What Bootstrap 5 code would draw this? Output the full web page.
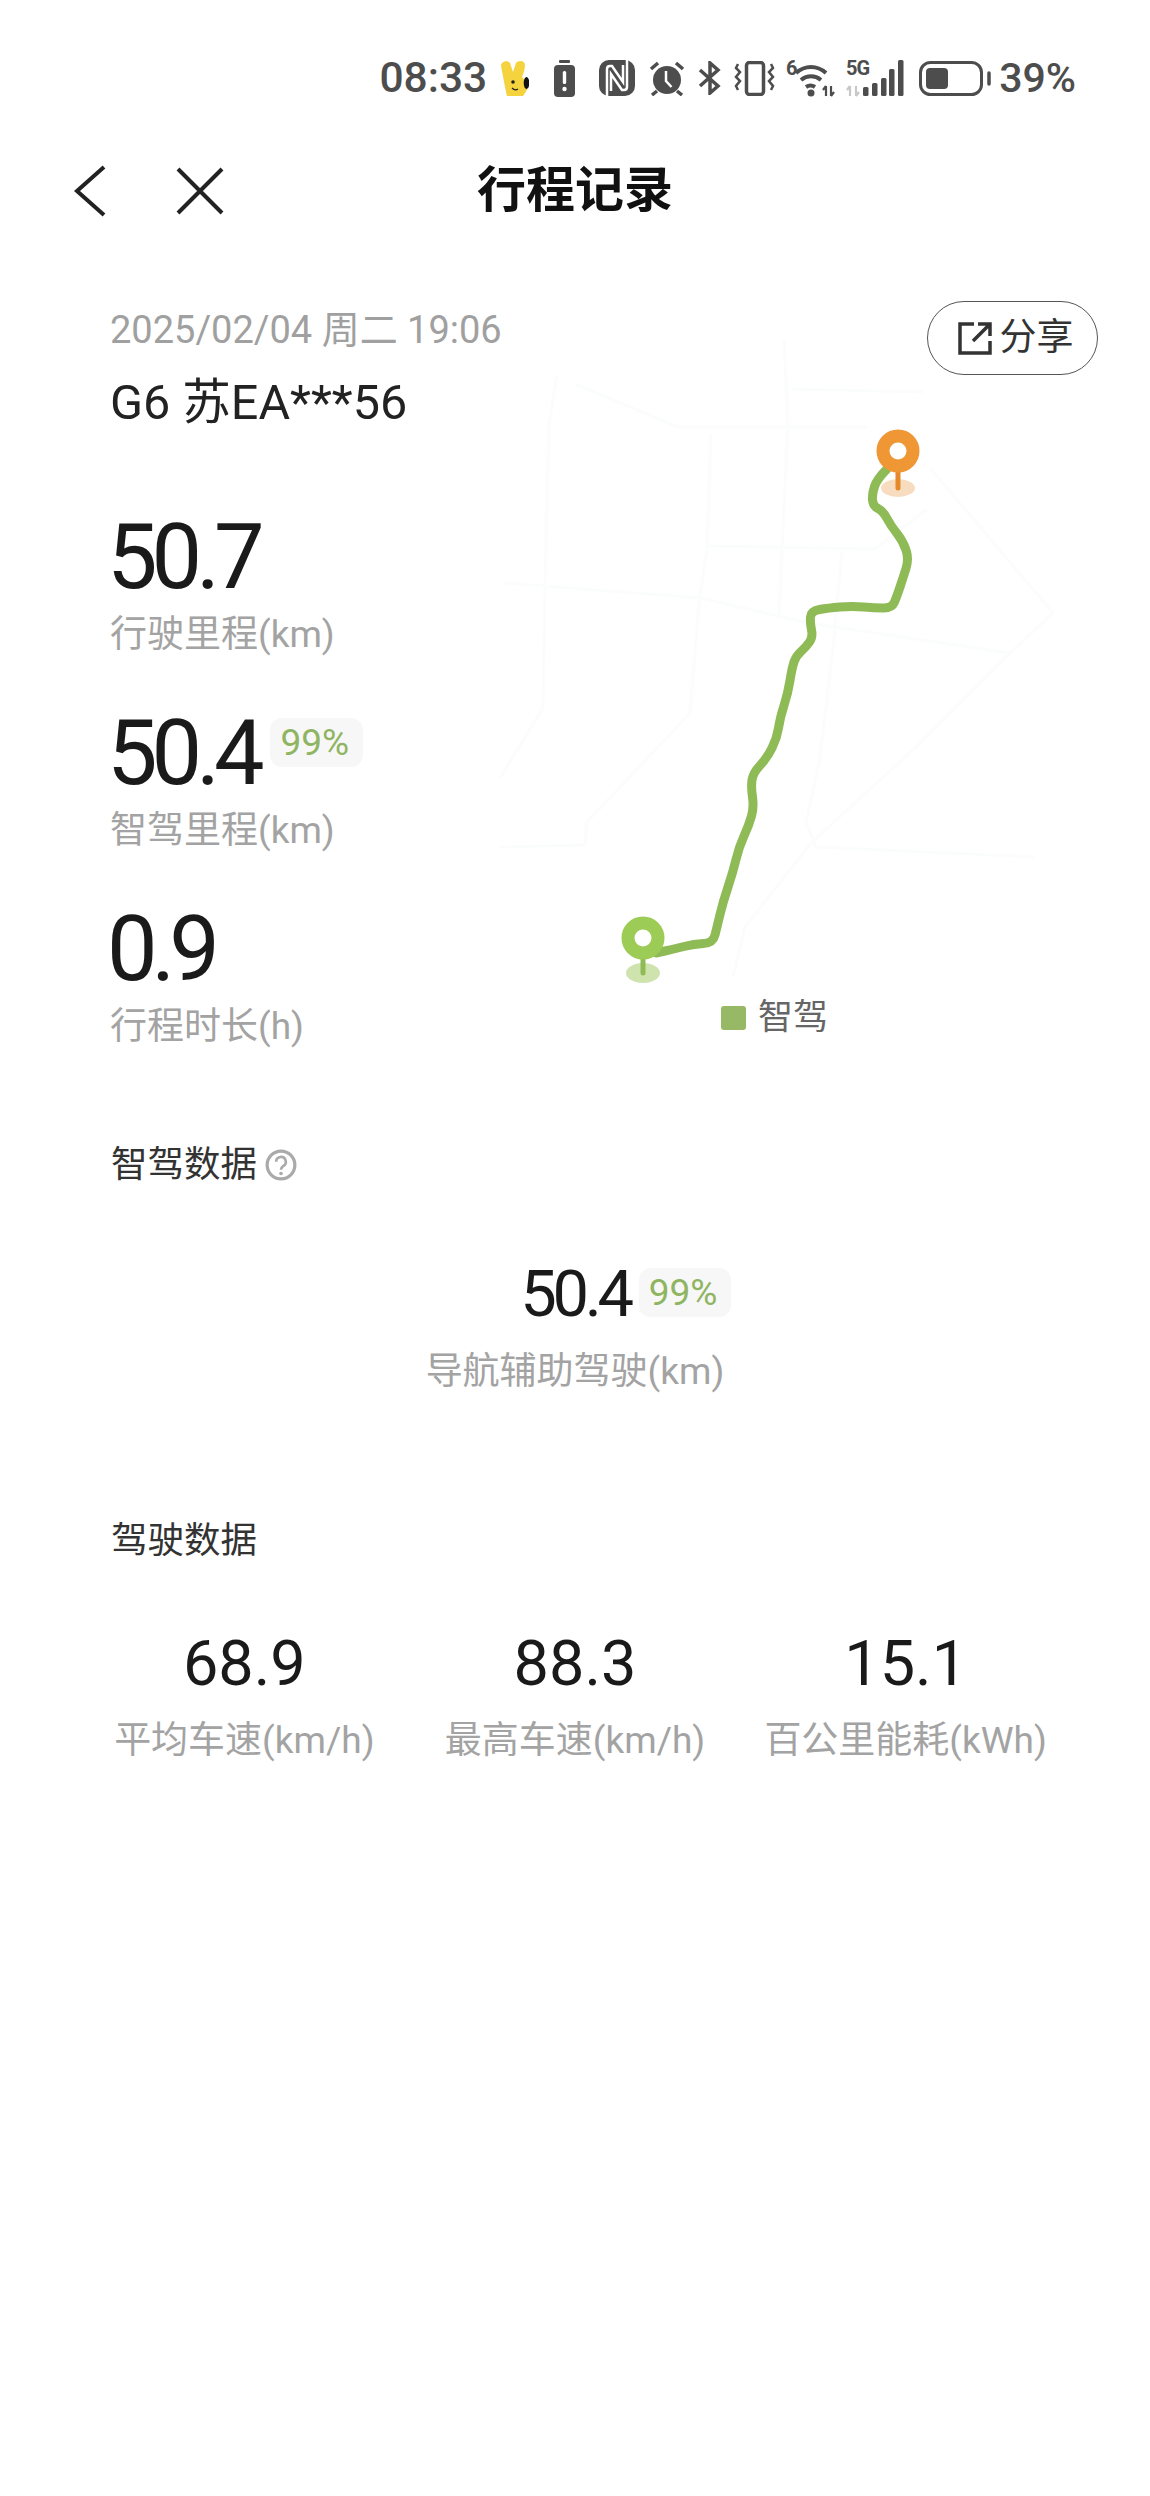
<!DOCTYPE html>
<html lang="zh-CN">
<head>
<meta charset="UTF-8">
<meta name="viewport" content="width=device-width, initial-scale=1.0">
<title>行程记录</title>
<link href="https://cdn.jsdelivr.net/npm/bootstrap@5.3.1/dist/css/bootstrap.min.css" rel="stylesheet">
<style>
    body {
        font-family: "Roboto", "Noto Sans CJK SC", sans-serif;
        background: #fff;
        color: #222;
        min-height: 2496px;
    }
    .status-bar {
        padding: 58px 74px 0 0;
        height: 98px;
        color: #4d4d4d;
        font-size: 41px;
        font-weight: 500;
        line-height: 40px;
    }
    .status-time { font-size: 42.5px; }
    .icon-tall { margin-top: -6px; }
    .top-nav { height: 186px; padding: 0 73px; }
    .nav-side { flex: 1 1 0; }
    .page-title { font-size: 49px; font-weight: 700; color: #111; line-height: 60px; margin: 0; }

    .trip-hero { padding: 23px 0 0 110px; height: 858px; }
    .trip-date { font-size: 38px; line-height: 46px; color: #a0a0a0; }
    .trip-car { font-size: 48.5px; line-height: 50px; margin-top: 25px; color: #222; }
    .stat-num { font-size: 90px; line-height: 72px; letter-spacing: -6px; color: #1a1a1a; font-weight: 400; margin-left: -3px; }
    .stat-label { font-size: 37px; line-height: 46px; color: #a3a3a3; margin-top: 18px; }
    .stat-first { margin-top: 94px; }
    .stat-next { margin-top: 60px; }
    .pct-tag {
        background: #f7f7f7;
        color: #8fb562;
        border-radius: 12px;
        font-size: 37px;
        line-height: 49px;
        padding: 0 14px 0 10px;
        letter-spacing: 0;
    }
    .share-btn {
        top: 17px;
        right: 52px;
        width: 171px;
        height: 74px;
        padding: 0 0 0 6px;
        border: 1px solid #555;
        border-radius: 37px;
        background: #fff;
        color: #333;
        font-size: 37px;
        line-height: 72px;
    }
    .route-map { left: 480px; top: -4px; width: 620px; height: 780px; }
    .map-legend { left: 721px; top: 711px; font-size: 35px; line-height: 46px; color: #666; }
    .legend-dot { width: 25px; height: 24px; background: #97b965; border-radius: 3px; }

    .sect-title { font-size: 36.5px; line-height: 46px; color: #333; padding-left: 111px; }
    .assist-num { font-size: 65px; line-height: 52px; letter-spacing: -4.3px; color: #1a1a1a; }
    .assist-tag { left: 100%; top: 0; margin-left: 9px; }
    .assist-box { margin-top: 80px; }
    .assist-label { margin-top: 26px; }
    .drive-title { margin-top: 123px; }
    .drive-row { padding: 0 79px; margin-top: 72px; }
    .drive-num { font-size: 63px; line-height: 56px; color: #1a1a1a; }
    .drive-label { font-size: 37px; line-height: 46px; color: #a3a3a3; margin-top: 26px; white-space: nowrap; }
</style>
</head>
<body>
    <div class="status-bar d-flex justify-content-end align-items-center">
        <span class="status-time">08:33</span>
        <svg style="margin-left:13px" width="29" height="36" viewBox="0 0 29 36"><path d="M1 6C1 1 8 0 10 3L13 12L16 3C18 0 25 0 25 5C25 10 23 14 22 17L27 22V30L23 36H7C5 28 3 16 1 6z" fill="#f5d33f"/><ellipse cx="26.500" cy="23" rx="2.800" ry="6" fill="#111"/><circle cx="13" cy="22" r="1.800" fill="#222"/><path d="M12 28q3 3 6 1" stroke="#222" stroke-width="1.200" fill="none"/></svg>
        <svg style="margin-left:25px" width="21" height="37" viewBox="0 0 21 37"><rect x="5" y="0" width="11" height="3" rx="1" fill="#4d4d4d"/><rect x="0" y="5" width="21" height="32" rx="4" fill="#4d4d4d"/><rect x="8.800" y="11" width="3.400" height="13" rx="1.500" fill="#fff"/><circle cx="10.500" cy="29" r="2.200" fill="#fff"/></svg>
        <svg style="margin-left:24px" width="36" height="36" viewBox="0 0 36 36" fill="none"><rect width="36" height="36" rx="10" fill="#4d4d4d"/><path d="M8 36V9Q8 6 11 6H13L24 22V5M28 0V27Q28 30 25 30H23L12 14V31" stroke="#fff" stroke-width="2.500"/></svg>
        <svg style="margin-left:14px" width="36" height="35" viewBox="0 0 36 35" fill="none"><circle cx="18" cy="19" r="14" fill="#4d4d4d"/><path d="M2 8l7-6M34 8l-7-6M8 30l-5 4M28 30l5 4" stroke="#4d4d4d" stroke-width="3.500"/><path d="M17 10v10l5.500 6" stroke="#fff" stroke-width="2.500"/></svg>
        <svg style="margin-left:13px" width="23" height="34" viewBox="0 0 23 34" fill="none"><path d="M2 9l18 16-8 7V2l8 7L2 25" stroke="#4d4d4d" stroke-width="3.500"/></svg>
        <svg style="margin-left:13px" width="41" height="35" viewBox="0 0 41 35" fill="none"><rect x="12.500" y="1.500" width="17" height="32" rx="3" stroke="#4d4d4d" stroke-width="3.500"/><path d="M4 3l-2 4 4 4-4 5 4 4-4 5 2 4M37 3l2 4-4 4 4 5-4 4 4 5-2 4" stroke="#4d4d4d" stroke-width="2.500"/></svg>
        <svg class="icon-tall" style="margin-left:11px" width="51" height="43" viewBox="0 -6 51 43" fill="none"><text x="0" y="15" font-family="Roboto" font-size="20" font-weight="700" fill="#4d4d4d">6</text><path d="M10 13c9-8 21-8 30 0M15 20c6-5 14-5 20 0M20 27c3-2 6-2 9 0" stroke="#4d4d4d" stroke-width="4"/><circle cx="25" cy="33" r="3.500" fill="#4d4d4d"/><path d="M40 26v10M40 26l-3 4M45 36V26M45 36l3-4" stroke="#4d4d4d" stroke-width="2.200"/></svg>
        <svg class="icon-tall" style="margin-left:9px" width="58" height="43" viewBox="0 -6 58 43" fill="none"><text x="0" y="15" font-family="Roboto" font-size="20" font-weight="700" letter-spacing="-1" fill="#4d4d4d">5G</text><path d="M4 26v10M4 26l-3 4M10 36V26M10 36l3-4" stroke="#c8c8c8" stroke-width="2.200"/><g fill="#4d4d4d"><rect x="17" y="27" width="5.500" height="9" rx="1.500"/><rect x="26" y="23" width="5.500" height="13" rx="1.500"/><rect x="35" y="18" width="5.500" height="18" rx="1.500"/><rect x="43" y="9" width="5.500" height="27" rx="1.500"/><rect x="52" y="0" width="5.500" height="36" rx="1.500"/></g></svg>
        <svg style="margin-left:15px" width="73" height="35" viewBox="0 0 73 35" fill="none"><rect x="1.500" y="1.500" width="61" height="32" rx="10" stroke="#4d4d4d" stroke-width="3"/><rect x="7" y="7" width="22" height="21" rx="4" fill="#4d4d4d"/><path d="M70 12v11" stroke="#4d4d4d" stroke-width="3.500" stroke-linecap="round"/></svg>
        <span style="margin-left:7px">39%</span>
    </div>

    <nav class="top-nav d-flex align-items-center">
        <div class="nav-side d-flex align-items-center">
            <svg width="34" height="52" viewBox="0 0 34 52"><path d="M31 2L4 26l27 24" stroke="#222" stroke-width="4" fill="none"/></svg>
            <svg style="margin-left:68px" width="50" height="50" viewBox="0 0 50 50"><path d="M3 3l44 44M47 3L3 47" stroke="#222" stroke-width="4" fill="none"/></svg>
        </div>
        <h1 class="page-title">行程记录</h1>
        <div class="nav-side"></div>
    </nav>

    <section class="trip-hero position-relative">
        <svg class="route-map position-absolute" viewBox="0 0 620 780" fill="none">
            <g stroke="#fbfcfc" stroke-width="3" stroke-linejoin="round">
                <path d="M77 95L69 144L65 303L63 428L20 498"/>
                <path d="M24 303L221 318L328 343L530 373"/>
                <path d="M95 104L198 147L387 147"/>
                <path d="M231 154L227 269L219 323L210 433L107 542L105 565L20 567"/>
                <path d="M304 60L308 144L302 269L299 338"/>
                <path d="M227 266L395 269L447 229"/>
                <path d="M362 271L354 358L340 478L326 542L336 567L554 577"/>
                <path d="M530 373L435 468L332 562L265 647L253 697"/>
                <path d="M530 373L573 333L451 189"/>
                <path d="M312 109L443 112"/>
            </g>
            <path id="route-line" stroke="#8fbb57" stroke-width="9" stroke-linejoin="round" stroke-linecap="round"/>
            <ellipse cx="418" cy="208" rx="17" ry="9" fill="#f8dcc0"/>
            <path d="M418 185v23" stroke="#e58a2c" stroke-width="5" stroke-linecap="round"/>
            <circle cx="418" cy="171" r="15" stroke="#ee9734" stroke-width="13" fill="#fff"/>
            <ellipse cx="163" cy="693" rx="17" ry="10" fill="#cfe3ae"/>
            <path d="M163 672v21" stroke="#8fbb57" stroke-width="5" stroke-linecap="round"/>
            <circle cx="163" cy="658" r="15" stroke="#9ccb56" stroke-width="13" fill="#fff"/>
        </svg>

        <button class="share-btn position-absolute d-flex align-items-center justify-content-center gap-2">
            <svg width="34" height="34" viewBox="0 0 34 34" fill="none"><path d="M16 3H2v29h30V20M20 3h12v12M32 3L15 20" stroke="#333" stroke-width="3.500"/></svg>
            <span>分享</span>
        </button>

        <div class="position-relative">
            <div class="trip-date">2025/02/04 周二 19:06</div>
            <div class="trip-car">G6 苏EA***56</div>

            <div class="stat-first stat-num">50.7</div>
            <div class="stat-label">行驶里程(km)</div>

            <div class="stat-next d-flex align-items-start">
                <div class="stat-num">50.4</div>
                <span class="pct-tag" style="margin-left:12px">99%</span>
            </div>
            <div class="stat-label">智驾里程(km)</div>

            <div class="stat-next stat-num">0.9</div>
            <div class="stat-label">行程时长(h)</div>
        </div>

        <div class="map-legend position-absolute d-flex align-items-center gap-2">
            <span class="legend-dot me-1"></span><span>智驾</span>
        </div>
    </section>

    <div class="sect-title d-flex align-items-center gap-2">
        <span>智驾数据</span>
        <svg width="32" height="32" viewBox="0 0 30 30" fill="none"><circle cx="15" cy="15" r="13" stroke="#aaa" stroke-width="3"/><path d="M10.500 12a4.500 4.500 0 1 1 6.500 4c-1.500 1-2 1.500-2 3.500" stroke="#aaa" stroke-width="2.500"/><circle cx="15" cy="23" r="1.700" fill="#aaa"/></svg>
    </div>

    <div class="assist-box text-center">
        <div class="d-inline-block position-relative">
            <div class="assist-num">50.4</div>
            <span class="pct-tag assist-tag position-absolute">99%</span>
        </div>
        <div class="stat-label assist-label">导航辅助驾驶(km)</div>
    </div>

    <div class="sect-title drive-title">驾驶数据</div>

    <div class="drive-row row g-0 text-center">
        <div class="col-4">
            <div class="drive-num">68.9</div>
            <div class="drive-label">平均车速(km/h)</div>
        </div>
        <div class="col-4">
            <div class="drive-num">88.3</div>
            <div class="drive-label">最高车速(km/h)</div>
        </div>
        <div class="col-4">
            <div class="drive-num">15.1</div>
            <div class="drive-label">百公里能耗(kWh)</div>
        </div>
    </div>

    <script src="https://cdn.jsdelivr.net/npm/bootstrap@5.3.1/dist/js/bootstrap.bundle.min.js"></script>
    <script>
        // route points, smoothed through the midpoints
        const routePts = [[407,189],[397,199],[392,214],[393,226],[403,231],[411,246],[423,261],[429,279],[423,298],[417,316],[412,328],[395,328],[372,326],[348,328],[331,331],[330,343],[333,357],[326,367],[316,376],[312,388],[308,413],[300,438],[297,458],[287,478],[273,493],[271,507],[274,527],[269,545],[259,567],[253,592],[243,622],[237,647],[233,663],[214,664],[194,669],[176,673]];
        let d = `M${routePts[0]}`;
        for (let i = 1; i < routePts.length - 1; i++) {
            const [x, y] = routePts[i];
            const [nx, ny] = routePts[i + 1];
            d += `Q${x} ${y} ${(x + nx) / 2} ${(y + ny) / 2}`;
        }
        d += `L${routePts[routePts.length - 1]}`;
        document.getElementById('route-line').setAttribute('d', d);
    </script>
</body>
</html>
